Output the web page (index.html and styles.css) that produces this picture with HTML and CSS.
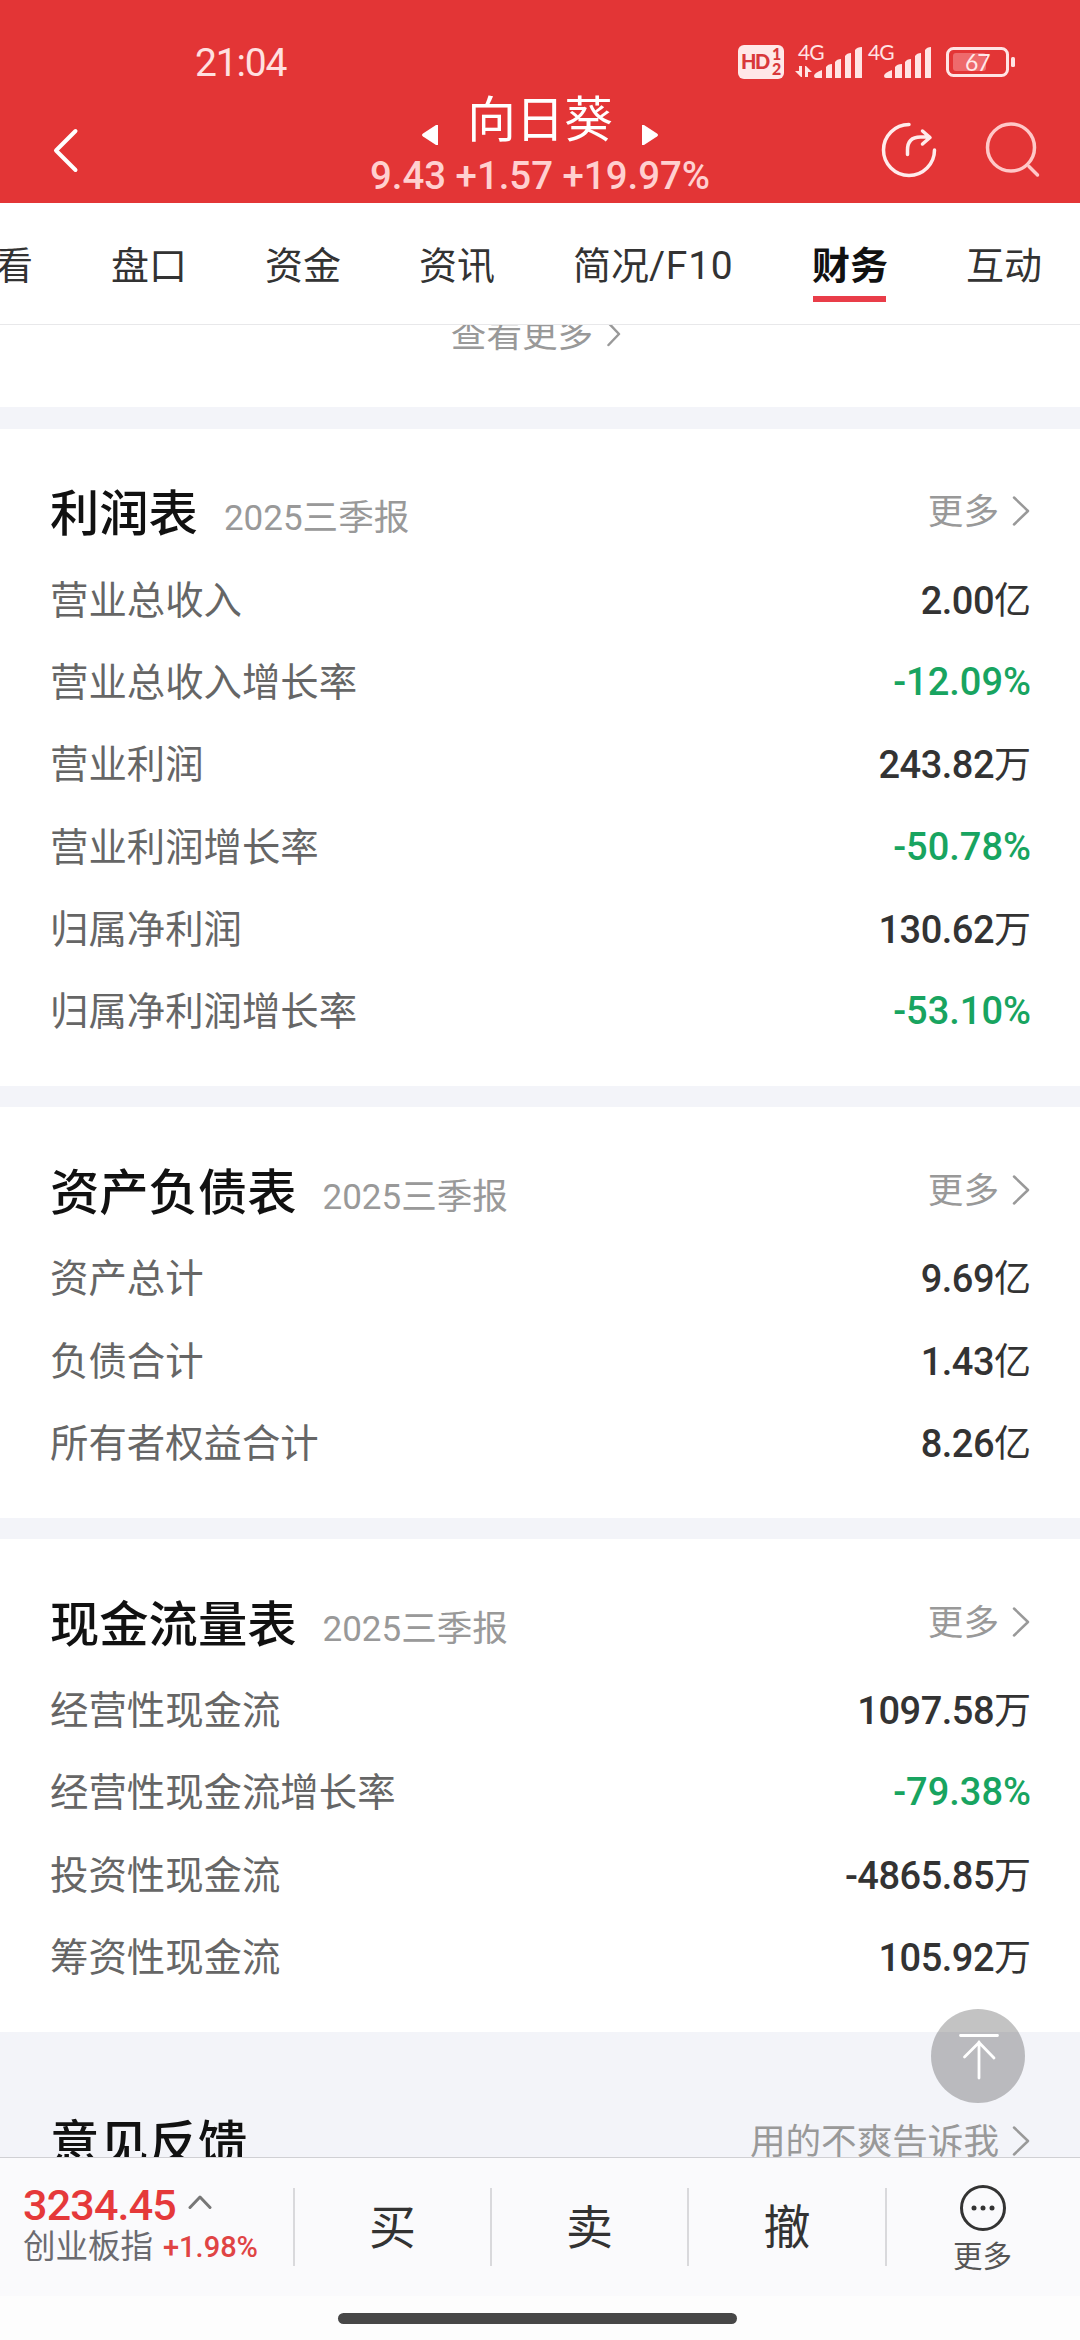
FILE: index.html
```html
<!DOCTYPE html>
<html lang="zh-CN">
<head>
    <meta charset="UTF-8">
    <meta name="viewport" content="width=device-width, initial-scale=1.0">
    <title>向日葵 - 财务</title>
    <link rel="stylesheet" href="styles.css">
</head>
<body>

<header class="header">
    <div class="status-bar">
        <span class="clock">21:04</span>
        <svg class="status-icons" width="280" height="40" viewBox="738 42 280 40">
            <rect x="738" y="45" width="46" height="34" rx="6" fill="#ffe8e8"/>
            <text class="hd" x="741" y="69">HD</text>
            <text class="hd-sim" x="772" y="60">1</text>
            <text class="hd-sim" x="772" y="75">2</text>
            <g fill="#ffe4e4">
                <text class="net" x="798" y="60">4G</text>
                <text class="net" x="868" y="60">4G</text>
                <path d="M799 66h3v11h-1l-6-6h4zM805 77v-11h1l6 6h-4v5z"/>
                <path d="M814 76q0-3 8-6v8h-6q-2 0-2-2zM826 67q2-3 6-3v14h-6zM835 62q2-3 6-3v19h-6zM845 56q2-3 6-3v25h-6zM855 50q2-3 7-3v31h-7z"/>
                <path d="M884 76q0-3 8-6v8h-6q-2 0-2-2zM895 67q2-3 7-3v14h-7zM905 62q2-3 6-3v19h-6zM915 56q2-3 6-3v25h-6zM925 50q2-3 6-3v31h-6z"/>
                <rect x="1011" y="57" width="4" height="10" rx="1.5"/>
            </g>
            <rect x="947.5" y="48.5" width="60" height="27" rx="6" fill="none" stroke="#ffe4e4" stroke-width="3"/>
            <rect x="953" y="53" width="33" height="18" rx="3" fill="#ee6a6c"/>
            <text class="battery" x="965" y="71">67</text>
        </svg>
    </div>
    <div class="nav-bar">
        <svg class="back" width="28" height="48" viewBox="52 126 28 48"><path d="M75.500 131L56 150.500L75.500 170"/></svg>
        <div class="stock">
            <div class="stock-name">
                <svg width="16" height="22" viewBox="0 0 16 22"><path d="M14 1h2v20h-2L1 12.500q-2-1.500 0-3z"/></svg>
                <span>向日葵</span>
                <svg width="16" height="22" viewBox="0 0 16 22"><path d="M2 1H0v20h2l13-8.500q2-1.500 0-3z"/></svg>
            </div>
            <div class="stock-price">9.43 +1.57 +19.97%</div>
        </div>
        <svg class="actions" width="160" height="60" viewBox="880 120 160 60">
            <path d="M909 124.500A25.500 25.500 0 1 0 934.500 150"/>
            <path d="M907.500 154.500V150q0-13 13-13h9M922.500 131l7.500 6.500l-7.500 6.500"/>
            <g class="search"><circle cx="1011" cy="147.500" r="23.500"/><path d="M1029 166.500l8.500 8.500"/></g>
        </svg>
    </div>
</header>

<nav class="tabs">
    <span>看</span>
    <span>盘口</span>
    <span>资金</span>
    <span>资讯</span>
    <span class="f10">简况<b>/F10</b></span>
    <span class="active">财务</span>
    <span>互动</span>
</nav>

<main class="content">
    <div class="view-more">查看更多<svg width="14" height="26" viewBox="0 0 14 26"><path d="M1.500 2L12 13L1.500 24"/></svg></div>

    <section class="card">
        <div class="card-head">
            <h2>利润表</h2>
            <span class="period"><b>2025</b>三季报</span>
            <span class="more">更多<svg width="18" height="30" viewBox="0 0 18 30"><path d="M2 1.500L16 15L2 28.500"/></svg></span>
        </div>
        <div class="row"><span>营业总收入</span><em>2.00<i>亿</i></em></div>
        <div class="row"><span>营业总收入增长率</span><em class="down">-12.09%</em></div>
        <div class="row"><span>营业利润</span><em>243.82<i>万</i></em></div>
        <div class="row"><span>营业利润增长率</span><em class="down">-50.78%</em></div>
        <div class="row"><span>归属净利润</span><em>130.62<i>万</i></em></div>
        <div class="row"><span>归属净利润增长率</span><em class="down">-53.10%</em></div>
    </section>

    <section class="card">
        <div class="card-head">
            <h2>资产负债表</h2>
            <span class="period"><b>2025</b>三季报</span>
            <span class="more">更多<svg width="18" height="30" viewBox="0 0 18 30"><path d="M2 1.500L16 15L2 28.500"/></svg></span>
        </div>
        <div class="row"><span>资产总计</span><em>9.69<i>亿</i></em></div>
        <div class="row"><span>负债合计</span><em>1.43<i>亿</i></em></div>
        <div class="row"><span>所有者权益合计</span><em>8.26<i>亿</i></em></div>
    </section>

    <section class="card">
        <div class="card-head">
            <h2>现金流量表</h2>
            <span class="period"><b>2025</b>三季报</span>
            <span class="more">更多<svg width="18" height="30" viewBox="0 0 18 30"><path d="M2 1.500L16 15L2 28.500"/></svg></span>
        </div>
        <div class="row"><span>经营性现金流</span><em>1097.58<i>万</i></em></div>
        <div class="row"><span>经营性现金流增长率</span><em class="down">-79.38%</em></div>
        <div class="row"><span>投资性现金流</span><em>-4865.85<i>万</i></em></div>
        <div class="row"><span>筹资性现金流</span><em>105.92<i>万</i></em></div>
    </section>

    <section class="feedback">
        <div class="card-head">
            <h2>意见反馈</h2>
            <span class="more">用的不爽告诉我<svg width="18" height="30" viewBox="0 0 18 30"><path d="M2 1.500L16 15L2 28.500"/></svg></span>
        </div>
    </section>
</main>

<button class="to-top">
    <svg width="94" height="94" viewBox="0 0 94 94"><path d="M29.500 26.500h37M48 33v36M33.500 48L48 33.500L63 49"/></svg>
</button>

<footer class="trade-bar">
    <div class="index">
        <div class="index-value">3234.45<svg width="24" height="16" viewBox="0 0 24 16"><path d="M2 13.500L12 3L22 13.500"/></svg></div>
        <div class="index-name">创业板指<b>+1.98%</b></div>
    </div>
    <div class="trade">买</div>
    <div class="trade">卖</div>
    <div class="trade">撤</div>
    <div class="trade-more">
        <svg width="46" height="48" viewBox="0 0 46 48">
            <circle cx="23" cy="24" r="21.500" fill="none" stroke="#333" stroke-width="3"/>
            <circle cx="14" cy="24" r="2.500"/><circle cx="23" cy="24" r="2.500"/><circle cx="32" cy="24" r="2.500"/>
        </svg>
        <span>更多</span>
    </div>
</footer>
<div class="home-indicator"><div></div></div>

</body>
</html>
```
FILE: styles.css
```css
* {
    box-sizing: border-box;
}
body {
    margin: 0;
    width: 1080px;
    height: 2340px;
    display: flex;
    flex-direction: column;
    overflow: hidden;
    position: relative;
    background: #fff;
    color: #333;
    font-family: "Noto Sans CJK SC", sans-serif;
}
svg {
    display: block;
    flex: none;
}
svg path {
    stroke-linecap: round;
    stroke-linejoin: round;
}
b, em, i {
    font-style: normal;
    font-weight: inherit;
}

/* header */
.header {
    height: 203px;
    background: #e33536;
    color: #fff;
}
.status-bar {
    height: 84px;
    padding: 42px 62px 0 195px;
    display: flex;
    justify-content: space-between;
}
.clock {
    font: 39px/42px Roboto, sans-serif;
    letter-spacing: -1.2px;
    color: #ffe0e0;
}
.status-icons {
    overflow: visible;
}
.status-icons text {
    font-family: Lato, sans-serif;
}
.status-icons .hd {
    font-size: 20px;
    font-weight: 900;
    letter-spacing: -1.5px;
    fill: #d8383a;
}
.status-icons .hd-sim {
    font-size: 16px;
    font-weight: 900;
    fill: #d8383a;
}
.status-icons .net {
    font-size: 21px;
    letter-spacing: -1px;
}
.status-icons .battery {
    font-size: 23px;
    letter-spacing: -1px;
    fill: #ffe8e8;
}
.nav-bar {
    height: 119px;
    padding: 0 40px 0 52px;
    display: grid;
    grid-template-columns: 200px 1fr 200px;
}
.nav-bar path, .nav-bar circle {
    fill: none;
    stroke: #fff;
    stroke-width: 4;
}
.nav-bar .actions path, .nav-bar .actions circle {
    stroke: #ffecec;
    stroke-width: 3.500;
}
.nav-bar .actions .search path, .nav-bar .actions .search circle {
    stroke: #ffc8c8;
}
.back {
    margin-top: 42px;
}
.actions {
    margin-top: 36px;
    justify-self: end;
}
.stock {
    display: flex;
    flex-direction: column;
    align-items: center;
    margin-left: -12px;
}
.stock-name {
    display: flex;
    align-items: center;
    gap: 29px;
    height: 70px;
    font-size: 48.500px;
    line-height: 65px;
    white-space: nowrap;
}
.stock-name span {
    height: 70px;
}
.stock-name svg {
    margin-top: 32px;
}
.nav-bar .stock-name path {
    fill: #fff;
    stroke: none;
}
.stock-price {
    font: 500 38.400px/43px Roboto, sans-serif;
    color: #ffd0d0;
    white-space: nowrap;
}

/* tabs */
.tabs {
    height: 122px;
    display: flex;
    gap: 78px;
    border-bottom: 1px solid #e8e8ea;
    font-size: 38px;
    line-height: 120px;
    white-space: nowrap;
}
.tabs span:first-child {
    margin-left: -5px;
}
.tabs .f10 {
    width: 161px;
}
.tabs .f10 b {
    font-family: Roboto, sans-serif;
    font-size: 39px;
    letter-spacing: 0.700px;
}
.tabs .active {
    position: relative;
    color: #111;
    font-weight: 700;
}
.tabs .active::after {
    content: "";
    position: absolute;
    left: 1px;
    right: 2px;
    top: 93px;
    height: 6px;
    background: #e93d49;
}

/* content */
.content {
    height: 1832px;
    overflow: hidden;
    background: #f3f4f9;
}
.view-more {
    height: 82px;
    display: flex;
    justify-content: center;
    align-items: flex-start;
    gap: 14px;
    padding-right: 8px;
    background: #fff;
    color: #999;
    font-size: 35.600px;
    line-height: 14px;
}
.view-more svg {
    margin-top: -4px;
}
.view-more path, .more path {
    fill: none;
    stroke: #999;
    stroke-width: 2.500;
}
.card {
    margin-top: 21.500px;
    padding-bottom: 34.500px;
    background: #fff;
}
.card + .card {
    margin-top: 21px;
}
.card-head {
    height: 129px;
    padding: 33px 50px 0;
    display: flex;
    align-items: center;
}
.card-head h2 {
    margin: 0;
    color: #111;
    font-size: 49.300px;
    font-weight: 500;
}
.period {
    margin: 10px 0 0 26px;
    color: #999;
    font-size: 35.600px;
}
.period b {
    font-family: Roboto, sans-serif;
    font-size: 35px;
}
.more {
    margin: -2px 0 0 auto;
    display: flex;
    align-items: center;
    gap: 13px;
    color: #999;
    font-size: 35.600px;
}
.more svg {
    margin-top: 5px;
}
.row {
    height: 82.400px;
    padding: 0 49px 0 50px;
    display: flex;
    justify-content: space-between;
    color: #666;
    font-size: 38.400px;
    line-height: 79px;
}
.row em {
    font-family: Roboto, "Noto Sans CJK SC", sans-serif;
    font-weight: 500;
    font-size: 38px;
    letter-spacing: -0.500px;
    line-height: 80px;
    color: #333;
}
.row em i {
    font-family: "Noto Sans CJK SC", sans-serif;
    font-weight: 400;
    font-size: 37px;
    letter-spacing: 0;
}
.row em.down {
    color: #18a460;
    letter-spacing: 0;
    line-height: 84px;
}
.feedback {
    padding-top: 26px;
}
.to-top {
    position: absolute;
    left: 931px;
    top: 2009px;
    width: 94px;
    height: 94px;
    padding: 0;
    border: none;
    border-radius: 50%;
    background: rgba(0, 0, 0, 0.235);
}
.to-top path {
    fill: none;
    stroke: #fff;
    stroke-width: 2.800;
}

/* bottom trade bar */
.trade-bar {
    height: 139px;
    display: grid;
    grid-template-columns: 293px 197px 197px 198px 195px;
    border-top: 1px solid #d0d0d4;
    background: #fafafc;
}
.index {
    padding: 22px 0 0 23px;
    white-space: nowrap;
}
.index-value {
    display: flex;
    gap: 12px;
    font: 500 43px/50px Roboto, sans-serif;
    letter-spacing: -0.800px;
    color: #e5393a;
}
.index-value svg {
    margin-top: 14px;
}
.index-value path {
    fill: none;
    stroke: #777;
    stroke-width: 3;
}
.index-name {
    display: flex;
    gap: 10px;
    font-size: 32.500px;
    line-height: 28px;
    color: #6b6b70;
}
.index-name b {
    font: 500 29px/35px Roboto, sans-serif;
    color: #e04444;
}
.trade, .trade-more {
    background: linear-gradient(#d9d9dc, #d9d9dc) 0 30px / 2px 78px no-repeat;
    text-align: center;
}
.trade {
    padding-left: 2px;
    font-size: 47px;
    line-height: 132px;
}
.trade-more {
    display: flex;
    flex-direction: column;
    align-items: center;
    padding-top: 26px;
    font-size: 29.500px;
    line-height: 45px;
    color: #555;
}
.trade-more circle {
    fill: #333;
}
.trade-more circle:first-child {
    fill: none;
}
.home-indicator {
    height: 44px;
    padding-top: 17px;
    background: #fdfdfd;
}
.home-indicator div {
    width: 399px;
    height: 11px;
    margin: 0 auto;
    border-radius: 6px;
    background: #474747;
    transform: translateX(-3px);
}
```
